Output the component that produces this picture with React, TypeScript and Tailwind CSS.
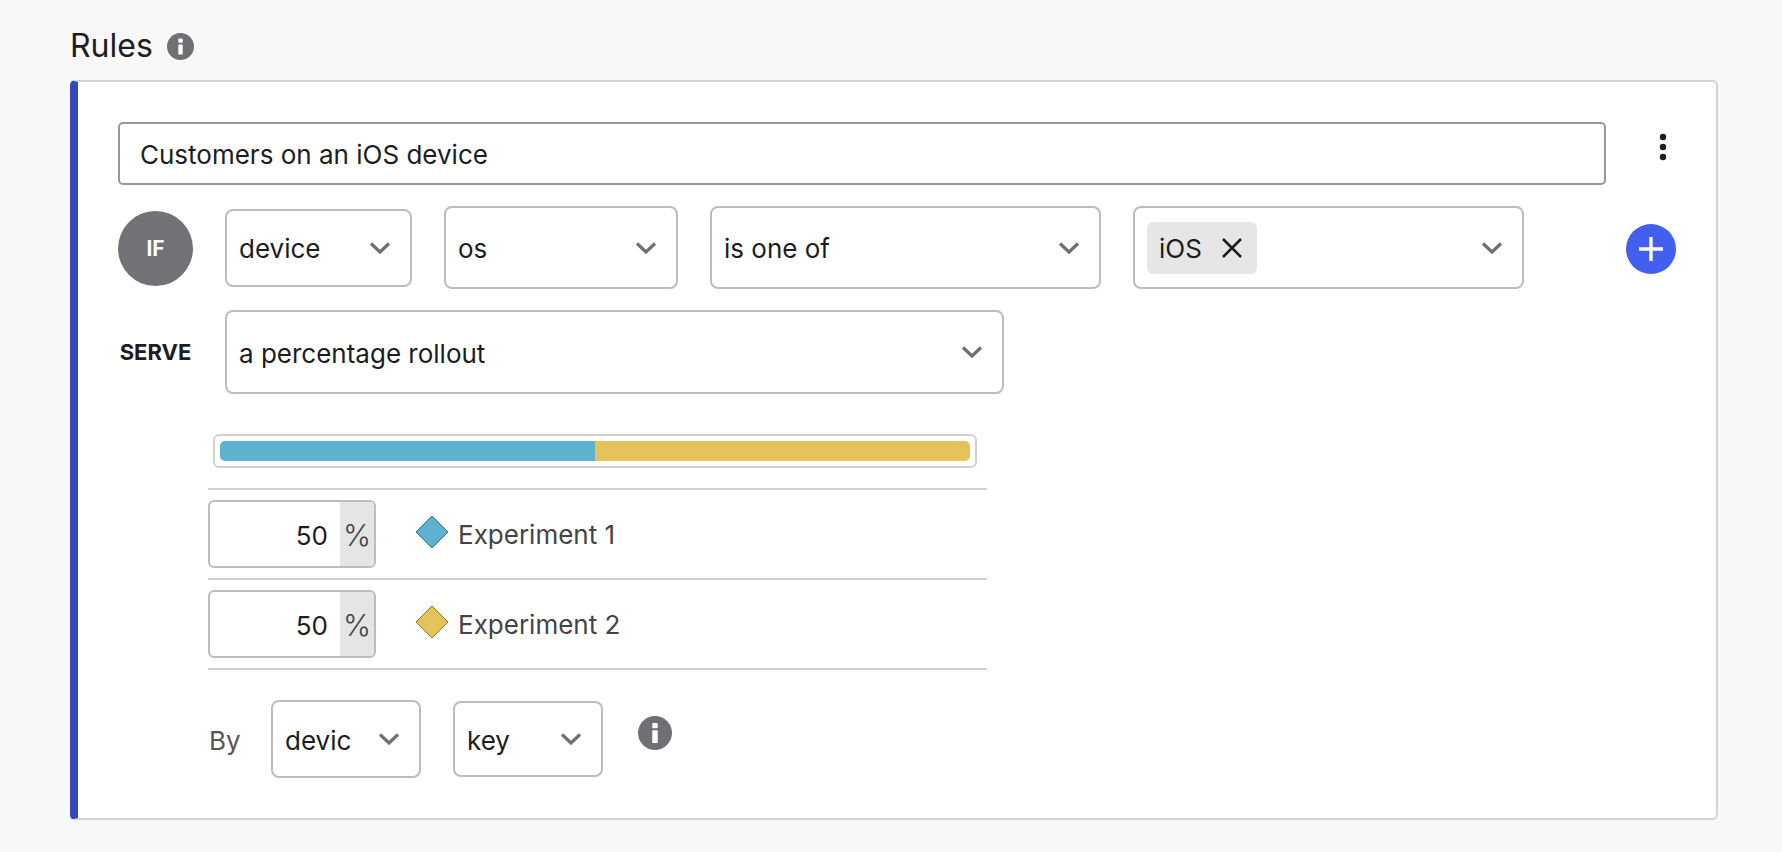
function Chevron() {
  return (
    <svg width="22" height="14" viewBox="0 0 22 14" fill="none" className="shrink-0">
      <path d="M2 2.5L11 11L20 2.5" stroke="#6f7074" strokeWidth="3.2" />
    </svg>
  );
}

function InfoIcon({ size }: { size: number }) {
  return (
    <svg width={size} height={size} viewBox="0 0 32 32" className="shrink-0">
      <circle cx="16" cy="16" r="16" fill="#6f7074" />
      <rect x="13.4" y="6.5" width="5.2" height="5" rx="1" fill="#fff" />
      <rect x="13.4" y="13.5" width="5.2" height="12" rx="0.6" fill="#fff" />
    </svg>
  );
}

function Select({ label, className }: { label: string; className: string }) {
  return (
    <div className={`flex shrink-0 items-center justify-between rounded-[8px] border-2 border-[#bdbdbd] bg-white pl-3 pr-[19px] text-[26px] text-[#1d1d1f] ${className}`}>
      <span className="pt-[2px]">{label}</span>
      <Chevron />
    </div>
  );
}

function VariationRow({ color, edge, name }: { color: string; edge: string; name: string }) {
  return (
    <div className="flex h-[90px] items-start border-t-2 border-[#d2d2d2] pt-[10px]">
      <div className="flex h-[68px] w-[168px] overflow-hidden rounded-[6px] border-2 border-[#bdbdbd] bg-white">
        <div className="flex flex-1 items-center justify-end pr-[12px] pt-[2px] text-[26px] text-[#1d1d1f]">50</div>
        <div className="flex w-[34px] items-center justify-center bg-[#e5e5e5] pt-[2px] text-[30px] font-light text-[#444]">%</div>
      </div>
      <svg width="34" height="34" viewBox="0 0 34 34" className="ml-[39px] mt-[15px] shrink-0">
        <path d="M17 1L33 17L17 33L1 17Z" fill={color} stroke={edge} strokeWidth="1" strokeLinejoin="round" />
      </svg>
      <span className="ml-[9px] mt-[17px] text-[26px] leading-[36px] text-[#444]">{name}</span>
    </div>
  );
}

export default function App() {
  return (
    <div className="min-h-[852px] bg-[#f8f8f8] pl-[70px] pr-[64px] pt-[28px] font-['Inter',sans-serif]">
      <div className="flex h-[36px] items-center gap-[14px]">
        <h2 className="text-[32px] font-normal leading-[36px] text-[#1d1d1f]">Rules</h2>
        <InfoIcon size={27} />
      </div>

      <div className="mt-[16px] h-[740px] rounded-[5px] border-2 border-l-8 border-[#d4d4d4] border-l-[#3448b8] bg-white pl-[40px] pt-[40px]">
        <div className="flex items-center">
          <div className="flex h-[63px] w-[1488px] items-center rounded-[5px] border-2 border-[#98989c] pl-[20px] pt-[2px] text-[26px] text-[#1d1d1f]">
            Customers on an iOS device
          </div>
          <svg width="8" height="28" viewBox="0 0 8 28" className="ml-[53px] -mt-[14px] shrink-0">
            <circle cx="4" cy="4" r="3.2" fill="#1d1d1f" />
            <circle cx="4" cy="14" r="3.2" fill="#1d1d1f" />
            <circle cx="4" cy="24" r="3.2" fill="#1d1d1f" />
          </svg>
        </div>

        <div className="mt-[21px] flex h-[83px] items-center">
          <div className="mt-[2px] flex h-[75px] w-[75px] shrink-0 items-center justify-center rounded-full bg-[#717276] text-[21px] font-bold text-white">IF</div>
          <Select label="device" className="ml-[32px] h-[78px] w-[187px]" />
          <Select label="os" className="ml-[32px] h-[83px] w-[234px]" />
          <Select label="is one of" className="ml-[32px] h-[83px] w-[391px]" />
          <div className="ml-[32px] flex h-[83px] w-[391px] shrink-0 items-center justify-between rounded-[8px] border-2 border-[#bdbdbd] pl-[12px] pr-[19px]">
            <div className="flex h-[52px] w-[110px] items-center rounded-[6px] bg-[#e6e6e6] pl-[12px] pt-[2px] text-[26px] text-[#1d1d1f]">
              iOS
              <svg width="22" height="22" viewBox="0 0 22 22" fill="none" className="-mt-[2px] ml-[19px]">
                <path d="M2 2L20 20M20 2L2 20" stroke="#1d1d1f" strokeWidth="2.6" />
              </svg>
            </div>
            <Chevron />
          </div>
          <div className="ml-[102px] mt-[2px] flex h-[50px] w-[50px] shrink-0 items-center justify-center rounded-full bg-[#425fef]">
            <svg width="26" height="26" viewBox="0 0 26 26">
              <path d="M13 1V25M1 13H25" stroke="#fff" strokeWidth="3.4" />
            </svg>
          </div>
        </div>

        <div className="mt-[21px] flex h-[84px] items-center">
          <div className="w-[75px] shrink-0 pt-[1px] text-center text-[22px] font-bold text-[#1d1d1f]">SERVE</div>
          <Select label="a percentage rollout" className="ml-[32px] h-[84px] w-[779px]" />
        </div>

        <div className="ml-[90px] mt-[40px] w-[779px]">
          <div className="ml-[5px] flex h-[34px] w-[764px] rounded-[6px] border-2 border-[#d2d2d2] p-[5px]">
            <div className="w-1/2 rounded-l-[5px] bg-[#5eb2cf]" />
            <div className="w-1/2 rounded-r-[5px] bg-[#e5c35b]" />
          </div>
          <div className="mt-[20px]">
            <VariationRow color="#5eb2cf" edge="#2f6f86" name="Experiment 1" />
            <VariationRow color="#e5c35b" edge="#8f7426" name="Experiment 2" />
            <div className="border-t-2 border-[#d2d2d2]" />
          </div>
          <div className="mt-[30px] flex items-center">
            <span className="w-[63px] shrink-0 pl-px pt-[2px] text-[26px] text-[#555]">By</span>
            <Select label="devic" className="h-[78px] w-[150px]" />
            <Select label="key" className="ml-[32px] h-[76px] w-[150px]" />
            <div className="ml-[35px] -mt-[12px]">
              <InfoIcon size={34} />
            </div>
          </div>
        </div>
      </div>
    </div>
  );
}
